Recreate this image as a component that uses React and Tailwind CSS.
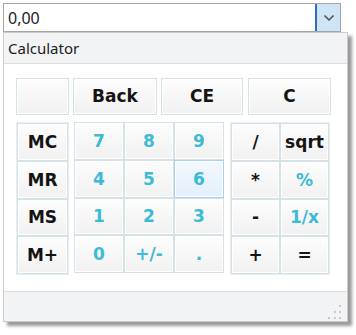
import React from 'react';

const cyan = 'text-[#3dbad6]';
const dark = 'text-[#141414]';

function Key({ label, tone = dark, w = 'w-[50px]', h = 'h-[38px]', hot = false }) {
  const face = hot
    ? 'border-[#a9d2f1] bg-gradient-to-b from-[#f2f8fe] to-[#e3effa]'
    : 'border-[#d4e2e8] bg-gradient-to-b from-[#fdfdfd] to-[#f1f1f1]';
  return (
    <div
      className={`${w} ${h} ${face} ${tone} border shadow-[inset_0_0_0_1px_#ffffff] flex items-center justify-center text-[17px] font-bold leading-none`}
      style={{ fontFamily: '"DejaVu Sans", Verdana, sans-serif' }}
    >
      {label}
    </div>
  );
}

function Grip() {
  const dots = [
    [11, 0],
    [6, 6], [11, 6],
    [0, 12], [6, 12], [11, 12],
  ];
  return (
    <svg width="14" height="14" viewBox="0 0 14 14">
      {dots.map(([x, y], i) => (
        <rect key={i} x={x} y={y} width="2" height="2" fill="#c8c8c8" />
      ))}
    </svg>
  );
}

export default function App() {
  const rowH = ['h-[38px]', 'h-[38px]', 'h-[37px]', 'h-[38px]'];
  const rows = [
    ['MC', ['7', '8', '9'], [['/', dark], ['sqrt', dark]]],
    ['MR', ['4', '5', '6'], [['*', dark], ['%', cyan]]],
    ['MS', ['1', '2', '3'], [['-', dark], ['1/x', cyan]]],
    ['M+', ['0', '+/-', '.'], [['+', dark], ['=', dark]]],
  ];

  return (
    <div className="w-[356px] h-[335px] bg-white relative" style={{ fontFamily: '"Noto Sans", "Open Sans", sans-serif' }}>
      {/* combo box */}
      <div className="ml-[3px] mt-[3px] w-[338px] h-[29px] border border-[#a6a6a6] bg-white flex items-stretch">
        <div className="flex-1 flex items-center pl-[4px] text-[16px] text-[#222]">0,00</div>
        <div className="w-[25px] border-l-2 border-[#2f6fb8] bg-[#cde5f7] flex items-center justify-center">
          <svg width="12" height="8" viewBox="0 0 12 8">
            <path d="M1.5 1.5 L6 6 L10.5 1.5" fill="none" stroke="#4d4d4d" strokeWidth="1.5" />
          </svg>
        </div>
      </div>

      {/* dropdown panel */}
      <div className="ml-[3px] w-[345px] border border-[#cbcbcb] bg-white shadow-[4px_4px_3px_rgba(0,0,0,0.4)]">
        <div className="h-[31px] bg-[#f2f3f5] border-b border-[#dedede] flex items-center pl-[4px] text-[15px] text-[#1c1c1c]">
          Calculator
        </div>

        <div className="h-[227px] pl-[12px] pt-[14px]">
          <div className="flex">
            <Key label="" w="w-[53px]" h="h-[37px]" />
            <div className="ml-[4px]"><Key label="Back" w="w-[84px]" h="h-[37px]" /></div>
            <div className="ml-[4px]"><Key label="CE" w="w-[82px]" h="h-[37px]" /></div>
            <div className="ml-[5px]"><Key label="C" w="w-[83px]" h="h-[37px]" /></div>
          </div>

          <div className="flex mt-[7px]">
            <div className="flex flex-col border border-[#e6eef1]">
              {rows.map(([m], i) => (
                <Key key={m} label={m} w="w-[51px]" h={rowH[i]} />
              ))}
            </div>
            <div className="ml-[5px] flex flex-col">
              {rows.map(([, digits], i) => (
                <div key={i} className="flex">
                  {digits.map((d) => (
                    <Key key={d} label={d} tone={cyan} h={rowH[i]} hot={d === '6'} />
                  ))}
                </div>
              ))}
            </div>
            <div className="ml-[6px] flex flex-col border border-[#e6eef1]">
              {rows.map(([, , ops], i) => (
                <div key={i} className="flex">
                  {ops.map(([o, tone]) => (
                    <Key key={o} label={o} tone={tone} w="w-[49px]" h={rowH[i]} />
                  ))}
                </div>
              ))}
            </div>
          </div>
        </div>

        <div className="h-[30px] bg-[#f2f3f5] border-t border-[#dedede] flex justify-end items-end pr-[5px] pb-[2px]">
          <Grip />
        </div>
      </div>
    </div>
  );
}
